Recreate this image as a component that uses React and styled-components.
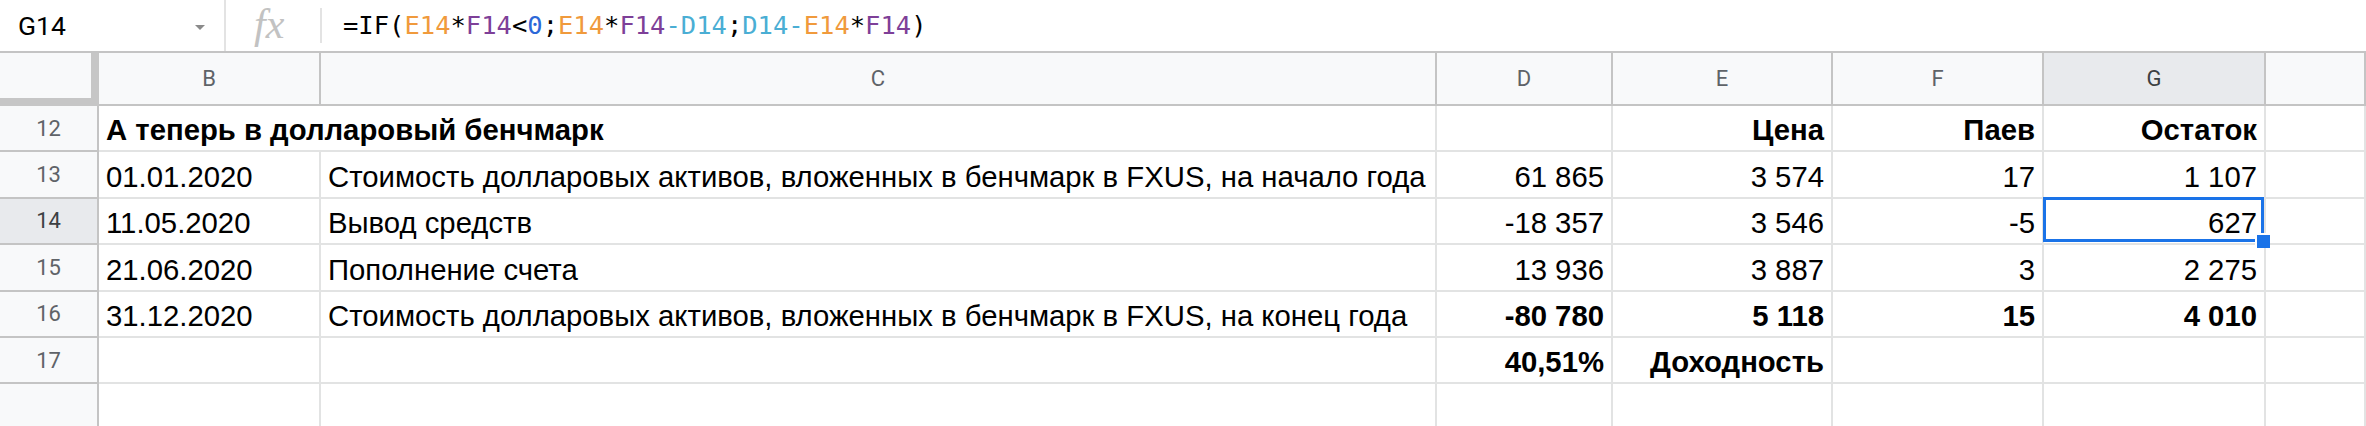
import React from 'react';
import styled, { createGlobalStyle } from 'styled-components';

const Global = createGlobalStyle`
  html, body { margin: 0; padding: 0; background: #ffffff; }
  body { width: 2366px; height: 426px; overflow: hidden; }
  * { box-sizing: border-box; }
`;

const Page = styled.div`
  width: 2366px;
  height: 426px;
  overflow: hidden;
  display: flex;
  flex-direction: column;
  background: #fff;
`;

const FormulaBar = styled.div`
  display: flex;
  align-items: stretch;
  height: 53px;
  flex: none;
  border-bottom: 2px solid #c4c4c4;
`;

const NameBox = styled.div`
  width: 226px;
  display: flex;
  align-items: center;
  justify-content: space-between;
  padding: 0 19px 0 18px;
  border-right: 2px solid #e3e3e3;
  font-family: Roboto, "Liberation Sans", sans-serif;
  font-size: 26.5px;
  color: #000;
`;

const Caret = styled.span`
  width: 0;
  height: 0;
  border-left: 5px solid transparent;
  border-right: 5px solid transparent;
  border-top: 5px solid #8a8a8a;
  margin-top: 3px;
`;

const FxBox = styled.div`
  width: 94px;
  display: flex;
  align-items: center;
  padding-left: 28px;
`;

const FxGlyph = styled.span`
  font-family: "Liberation Serif", "DejaVu Serif", serif;
  font-style: italic;
  font-size: 42px;
  color: #c2c2c2;
  letter-spacing: 0px;
  line-height: 1;
  margin-top: -4px;
`;

const Divider = styled.div`
  width: 2px;
  height: 35px;
  align-self: center;
  background: #e3e3e3;
`;

const FormulaText = styled.div`
  display: flex;
  align-items: center;
  padding-left: 21px;
  font-family: "DejaVu Sans Mono", "Liberation Mono", monospace;
  font-size: 25.5px;
  color: #000;
  white-space: pre;
  margin-top: -2px;
`;

const Tok = styled.span`
  color: ${(p) => p.$c || '#000'};
`;

const Grid = styled.div`
  display: grid;
  grid-template-columns: 99px 222px 1116px 176px 220px 211px 222px 1fr;
  grid-template-rows: 53px;
  grid-auto-rows: 46.4px;
`;

const Corner = styled.div`
  background: #f8f9fa;
  border-right: 8px solid #c6c6c6;
  border-bottom: 8px solid #c6c6c6;
`;

const ColHead = styled.div`
  background: ${(p) => (p.$active ? '#e8eaed' : '#f8f9fa')};
  border-right: 2px solid #c4c4c4;
  border-bottom: 2px solid #c4c4c4;
  display: flex;
  align-items: center;
  justify-content: center;
  font-family: Roboto, "Liberation Sans", sans-serif;
  font-size: 22px;
  color: ${(p) => (p.$active ? '#3c4043' : '#5f6368')};
`;

const RowHead = styled.div`
  background: ${(p) => (p.$active ? '#e8eaed' : '#f8f9fa')};
  border-right: 2px solid #c4c4c4;
  border-bottom: 2px solid #c4c4c4;
  display: flex;
  align-items: center;
  justify-content: center;
  font-family: Roboto, "Liberation Sans", sans-serif;
  font-size: 22px;
  color: ${(p) => (p.$active ? '#3c4043' : '#5f6368')};
`;

const Cell = styled.div`
  position: relative;
  z-index: ${(p) => (p.$sel ? 2 : 'auto')};
  grid-column: ${(p) => (p.$span ? `span ${p.$span}` : 'auto')};
  border-right: 2px solid #e2e3e3;
  border-bottom: 2px solid #e2e3e3;
  display: flex;
  align-items: flex-end;
  justify-content: ${(p) => (p.$right ? 'flex-end' : 'flex-start')};
  padding: 0 7px 3px 7px;
  font-family: "Liberation Sans", Arial, sans-serif;
  font-size: 29.3px;
  font-weight: ${(p) => (p.$bold ? 700 : 400)};
  color: #000;
  white-space: nowrap;
  overflow: visible;
`;

const Selection = styled.div`
  position: absolute;
  top: -2px;
  left: -1px;
  right: 0;
  bottom: 1px;
  border: 3px solid #1a73e8;
  pointer-events: none;
`;

const Handle = styled.div`
  position: absolute;
  right: -9px;
  bottom: -9px;
  width: 15px;
  height: 15px;
  background: #1a73e8;
  border-top: 2px solid #fff;
  border-left: 2px solid #fff;
`;

const ORANGE = '#f09a3c';
const PURPLE = '#7e3f98';
const CYAN = '#4aaed4';
const BLUE = '#2c68d8';

const formula = [
  ['=IF(', null],
  ['E14', ORANGE],
  ['*', null],
  ['F14', PURPLE],
  ['<', null],
  ['0', BLUE],
  [';', null],
  ['E14', ORANGE],
  ['*', null],
  ['F14', PURPLE],
  ['-', CYAN],
  ['D14', CYAN],
  [';', null],
  ['D14', CYAN],
  ['-', CYAN],
  ['E14', ORANGE],
  ['*', null],
  ['F14', PURPLE],
  [')', null],
];

const columns = ['B', 'C', 'D', 'E', 'F', 'G', ''];

const rows = [
  {
    n: '12',
    cells: [
      { t: 'А теперь в долларовый бенчмарк', b: true, span: 2 },
      { t: '' },
      { t: 'Цена', b: true, r: true },
      { t: 'Паев', b: true, r: true },
      { t: 'Остаток', b: true, r: true },
      { t: '' },
    ],
  },
  {
    n: '13',
    cells: [
      { t: '01.01.2020' },
      { t: 'Стоимость долларовых активов, вложенных в бенчмарк в FXUS, на начало года' },
      { t: '61 865', r: true },
      { t: '3 574', r: true },
      { t: '17', r: true },
      { t: '1 107', r: true },
      { t: '' },
    ],
  },
  {
    n: '14',
    active: true,
    cells: [
      { t: '11.05.2020' },
      { t: 'Вывод средств' },
      { t: '-18 357', r: true },
      { t: '3 546', r: true },
      { t: '-5', r: true },
      { t: '627', r: true, sel: true },
      { t: '' },
    ],
  },
  {
    n: '15',
    cells: [
      { t: '21.06.2020' },
      { t: 'Пополнение счета' },
      { t: '13 936', r: true },
      { t: '3 887', r: true },
      { t: '3', r: true },
      { t: '2 275', r: true },
      { t: '' },
    ],
  },
  {
    n: '16',
    cells: [
      { t: '31.12.2020' },
      { t: 'Стоимость долларовых активов, вложенных в бенчмарк в FXUS, на конец года' },
      { t: '-80 780', r: true, b: true },
      { t: '5 118', r: true, b: true },
      { t: '15', r: true, b: true },
      { t: '4 010', r: true, b: true },
      { t: '' },
    ],
  },
  {
    n: '17',
    cells: [
      { t: '' },
      { t: '' },
      { t: '40,51%', r: true, b: true },
      { t: 'Доходность', r: true, b: true },
      { t: '' },
      { t: '' },
      { t: '' },
    ],
  },
  {
    n: '',
    cells: [{ t: '' }, { t: '' }, { t: '' }, { t: '' }, { t: '' }, { t: '' }, { t: '' }],
  },
];

export default function App() {
  return (
    <Page>
      <Global />
      <FormulaBar>
        <NameBox>
          <span>G14</span>
          <Caret />
        </NameBox>
        <FxBox>
          <FxGlyph>fx</FxGlyph>
        </FxBox>
        <Divider />
        <FormulaText>
          {formula.map(([t, c], i) => (
            <Tok key={i} $c={c}>
              {t}
            </Tok>
          ))}
        </FormulaText>
      </FormulaBar>
      <Grid>
        <Corner />
        {columns.map((c, i) => (
          <ColHead key={i} $active={c === 'G'}>
            {c}
          </ColHead>
        ))}
        {rows.map((row, ri) => (
          <React.Fragment key={ri}>
            <RowHead $active={row.active}>{row.n}</RowHead>
            {row.cells.map((cell, ci) => (
              <Cell key={ci} $span={cell.span} $right={cell.r} $bold={cell.b} $sel={cell.sel}>
                {cell.t}
                {cell.sel && (
                  <Selection>
                    <Handle />
                  </Selection>
                )}
              </Cell>
            ))}
          </React.Fragment>
        ))}
      </Grid>
    </Page>
  );
}
